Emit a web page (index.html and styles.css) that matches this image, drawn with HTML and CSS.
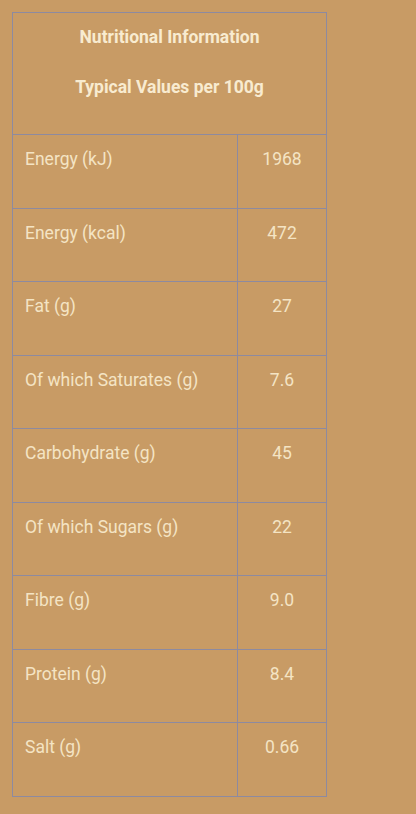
FILE: index.html
```html
<!DOCTYPE html>
<html lang="en">
<head>
  <meta charset="UTF-8">
  <meta name="viewport" content="width=device-width, initial-scale=1.0">
  <title>Nutritional Information</title>
  <link rel="stylesheet" href="styles.css">
</head>
<body>
  <table class="nutrition">
    <thead>
      <tr>
        <th colspan="2">
          <p>Nutritional Information</p>
          <p>Typical Values per 100g</p>
        </th>
      </tr>
    </thead>
    <tbody>
      <tr><td>Energy (kJ)</td><td class="value">1968</td></tr>
      <tr><td>Energy (kcal)</td><td class="value">472</td></tr>
      <tr><td>Fat (g)</td><td class="value">27</td></tr>
      <tr><td>Of which Saturates (g)</td><td class="value">7.6</td></tr>
      <tr><td>Carbohydrate (g)</td><td class="value">45</td></tr>
      <tr><td>Of which Sugars (g)</td><td class="value">22</td></tr>
      <tr><td>Fibre (g)</td><td class="value">9.0</td></tr>
      <tr><td>Protein (g)</td><td class="value">8.4</td></tr>
      <tr><td>Salt (g)</td><td class="value">0.66</td></tr>
    </tbody>
  </table>
</body>
</html>
```

FILE: styles.css
```css
html, body {
    background-color: #c89b65;
}

body {
    margin: 0;
    padding: 12px;
    font-family: Roboto, "Liberation Sans", sans-serif;
    font-size: 17.5px;
    color: #f4e4c4;
}

.nutrition {
    width: 315px;
    border-collapse: collapse;
    border: 1px solid #8d8aa0;
}

.nutrition th {
    padding: 12px 12px 9px;
    border: 1px solid #8d8aa0;
    font-weight: 700;
    text-align: center;
    color: #f8ebd0;
}

.nutrition th p {
    margin: 0 0 26px;
    line-height: 24px;
}

.nutrition td {
    padding: 12px 12px 36px;
    border: 1px solid #8d8aa0;
    line-height: 24px;
    vertical-align: top;
    font-weight: 400;
}

.nutrition tbody tr:nth-child(odd) td {
    padding-bottom: 37px;
}

.nutrition td.value {
    width: 88px;
    padding-left: 0;
    padding-right: 0;
    text-align: center;
}
```
